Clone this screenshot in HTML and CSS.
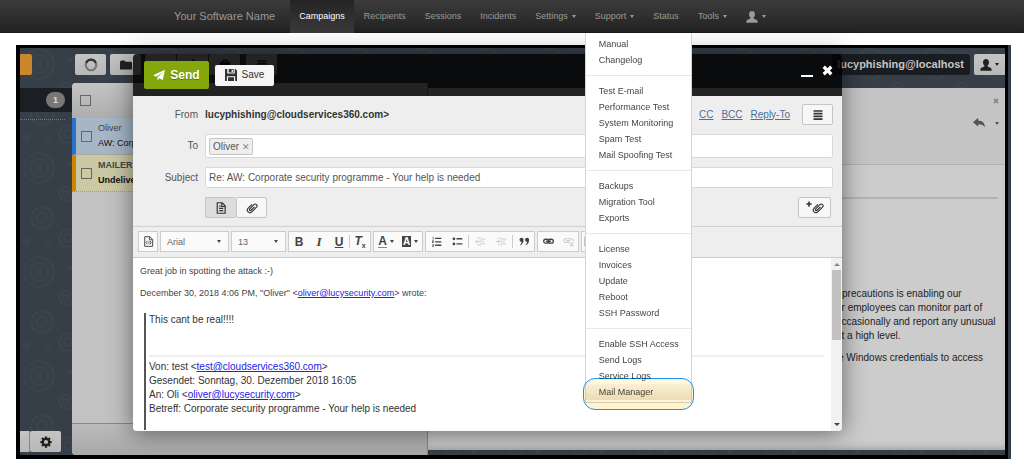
FILE: index.html
```html
<!DOCTYPE html>
<html lang="en">
<head>
<meta charset="utf-8">
<title>Your Software Name</title>
<link rel="stylesheet" href="styles.css">
</head>
<body>
<svg class="sprite" aria-hidden="true">
  <symbol id="user" viewBox="0 0 16 16"><path d="M8 0c2.600 0 4 1.800 4 4.200 0 1.700-.8 3.500-1.900 4.400v1.200c1 1.300 5.400 1.500 5.400 4.200v1.500H.5V14c0-2.700 4.400-2.900 5.400-4.200V8.600C4.800 7.700 4 5.900 4 4.200 4 1.800 5.400 0 8 0z"/></symbol>
  <symbol id="plane" viewBox="0 0 16 16"><path d="M16 1 13 14.500 8.300 12.200 6 15.500V11.300L13.500 3.800 4.500 10.300.2 8.400z"/></symbol>
  <symbol id="floppy" viewBox="0 0 16 16"><path d="M0 0h3v6h10V0h1l2 2v14h-2.500V9.500h-11V16H0zM5 0h6.500v4.800H5zm3.800.9v3h1.700v-3zM4 11h8v5H4z" fill-rule="evenodd"/></symbol>
  <symbol id="bars" viewBox="0 0 16 16"><path d="M2 1.500h12v2.200H2zm0 3.600h12v2.200H2zm0 3.600h12v2.200H2zm0 3.600h12v2.200H2z"/></symbol>
  <symbol id="clip" viewBox="0 0 16 16"><path transform="rotate(45 8 8)" d="M4.500 4.500v7.300a3.500 3.500 0 0 0 7 0V3a2.400 2.400 0 0 0-4.800 0v8a1.200 1.200 0 0 0 2.500 0V4.500" fill="none" stroke="currentColor" stroke-width="1.500"/></symbol>
  <symbol id="doc" viewBox="0 0 16 16"><path d="M3 1h6.500L13.500 5v10H3zM9 1.500V6h4M5.500 8.500h5.500M5.500 11.500h5.500M5.500 5.500h2" fill="none" stroke="currentColor" stroke-width="1.600"/></symbol>
  <symbol id="source" viewBox="0 0 16 16"><path d="M2.500 1h7.500L14 5v10H2.500zM9.500 1.500V5.500H13.500M6.500 7 4.500 9.500l2 2.500M10 7l2 2.500-2 2.500M8.800 8v3" fill="none" stroke="currentColor" stroke-width="1.400"/></symbol>
  <symbol id="numbers" viewBox="0 0 16 16"><path d="M6 2.500h9v2H6zm0 5h9v2H6zm0 5h9v2H6zM2.500 1h1v4h-1zM1.500 6.500h2.500v2l-1.500 1H4v.8H1.300v-1l1.600-1.200H1.500zM1.500 11.500H4v4H1.500v-.8h1.600v-1H2v-.6h1.100v-.8H1.500z"/></symbol>
  <symbol id="bullets" viewBox="0 0 16 16"><path d="M6.500 3h8.500v2H6.500zm0 7.500h8.500v2H6.500z"/><circle cx="2.800" cy="4" r="2"/><circle cx="2.800" cy="11.500" r="2"/></symbol>
  <symbol id="outdent" viewBox="0 0 16 16"><path d="M7 1h1v14H7zM9 3.500h6V5H9zm0 3.500h4v1.500H9zm0 3.500h6V12H9zM0 8l3.500-3v2.200H6.500v1.600H3.500V11zM3 2.500h4v1H3zm0 10h4v1H3z"/></symbol>
  <symbol id="indent" viewBox="0 0 16 16"><path d="M7 1h1v14H7zM9 3.500h6V5H9zm0 3.500h4v1.500H9zm0 3.500h6V12H9zM6.500 8 3 5v2.200H0v1.600h3V11zM2 2.500h4v1H2zm0 10h4v1H2z"/></symbol>
  <symbol id="quote" viewBox="0 0 16 16"><path d="M3.700 2.500a3 3 0 0 1 3 3.100c0 3.300-1.600 6.200-4.400 7.900l-.7-.8c1.300-1.200 2.100-2.600 2.200-4.100A3 3 0 0 1 3.700 2.500zm8 0a3 3 0 0 1 3 3.100c0 3.300-1.600 6.200-4.400 7.900l-.7-.8c1.300-1.200 2.100-2.600 2.200-4.100a3 3 0 0 1-.1-6.100z"/></symbol>
  <symbol id="link" viewBox="0 0 16 16"><g fill="none" stroke="currentColor" stroke-width="1.900"><rect x="1" y="4.700" width="7.500" height="5.800" rx="2.900"/><rect x="7.500" y="4.700" width="7.500" height="5.800" rx="2.900"/><path d="M4.500 7.600h7"/></g></symbol>
  <symbol id="unlink" viewBox="0 0 16 16"><g fill="none" stroke="currentColor" stroke-width="1.700"><path d="M10 9.500H4a2.700 2.700 0 0 1 0-5.500h8a2.700 2.700 0 0 1 2.500 4M4.500 6.800h6M10 9.500l5 5.500M15 9.500l-5 5.500"/></g></symbol>
  <symbol id="table" viewBox="0 0 16 16"><path d="M1 1h14v14H1zM2.500 5v3.500H7V5zm6 0v3.500h5V5zm-6 5v3.500H7V10zm6 0v3.500h5V10z" fill-rule="evenodd"/></symbol>
  <symbol id="gear" viewBox="0 0 16 16"><circle cx="8" cy="8" r="4.300" fill="none" stroke="currentColor" stroke-width="3"/><path d="M8 .5v3M8 12.500v3M.5 8h3M12.500 8h3M2.700 2.700l2 2M11.300 11.300l2 2M13.300 2.700l-2 2M4.700 11.300l-2 2" fill="none" stroke="currentColor" stroke-width="3"/></symbol>
  <symbol id="spinner" viewBox="0 0 16 16"><circle cx="8" cy="8" r="6" fill="none" stroke="#777" stroke-width="2.500"/><path d="M2.500 5.500A6 6 0 0 1 13.500 5.500" fill="none" stroke="#333" stroke-width="2.500"/></symbol>
  <symbol id="folder" viewBox="0 0 16 16"><path d="M0 3.500 1.500 2H6l1.500 1.800H14.500L16 5v9H0z"/></symbol>
  <symbol id="reply" viewBox="0 0 16 16"><path d="M0 7 7 1v3.500c5.500.2 8.700 3.200 9 9.500-2-3.300-4.700-4.400-9-4.400V13z"/></symbol>
  <symbol id="trash" viewBox="0 0 16 16"><path d="M2 7h12l-1 8H3zM1 5h14M4 5a4 3.500 0 0 1 8 0M6 9v4M10 9v4" fill="none" stroke="currentColor" stroke-width="2"/></symbol>
  <symbol id="plus" viewBox="0 0 16 16"><path d="M6 1h4v5h5v4h-5v5H6v-5H1V6h5z"/></symbol>
  <symbol id="close" viewBox="0 0 16 16"><path d="m4.200.8 3.800 3.800L11.800.8l3.400 3.400L11.400 8l3.800 3.800-3.400 3.400L8 11.400l-3.800 3.800-3.400-3.400L4.600 8 .8 4.200z"/></symbol>
</svg>

<nav class="navbar">
  <a class="brand" href="#">Your Software Name</a>
  <ul class="nav">
    <li class="active"><a href="#">Campaigns</a></li>
    <li><a href="#">Recipients</a></li>
    <li><a href="#">Sessions</a></li>
    <li><a href="#">Incidents</a></li>
    <li><a href="#">Settings <i class="caret"></i></a></li>
    <li class="open"><a href="#">Support <i class="caret"></i></a>
      <div class="dropdown">
        <ul>
          <li><a href="#">Manual</a></li>
          <li><a href="#">Changelog</a></li>
        </ul>
        <ul>
          <li><a href="#">Test E-mail</a></li>
          <li><a href="#">Performance Test</a></li>
          <li><a href="#">System Monitoring</a></li>
          <li><a href="#">Spam Test</a></li>
          <li><a href="#">Mail Spoofing Test</a></li>
        </ul>
        <ul>
          <li><a href="#">Backups</a></li>
          <li><a href="#">Migration Tool</a></li>
          <li><a href="#">Exports</a></li>
        </ul>
        <ul>
          <li><a href="#">License</a></li>
          <li><a href="#">Invoices</a></li>
          <li><a href="#">Update</a></li>
          <li><a href="#">Reboot</a></li>
          <li><a href="#">SSH Password</a></li>
        </ul>
        <ul>
          <li><a href="#">Enable SSH Access</a></li>
          <li><a href="#">Send Logs</a></li>
          <li><a href="#">Service Logs</a></li>
          <li class="current"><a href="#">Mail Manager</a><span class="highlight"></span></li>
        </ul>
      </div>
    </li>
    <li><a href="#">Status</a></li>
    <li><a href="#">Tools <i class="caret"></i></a></li>
    <li><a href="#" aria-label="Account"><svg class="icon"><use href="#user"/></svg> <i class="caret"></i></a></li>
  </ul>
</nav>

<main class="page">
  <div class="frame">
    <svg class="pattern" aria-hidden="true">
      <defs>
        <pattern id="rings" width="64" height="104" patternUnits="userSpaceOnUse">
          <g fill="none" stroke="#454d57" stroke-width="2">
            <circle cx="19" cy="16" r="15"/><circle cx="19" cy="16" r="9"/><circle cx="19" cy="16" r="3"/>
            <circle cx="46" cy="42" r="7"/><circle cx="46" cy="42" r="3"/>
            <circle cx="22" cy="66" r="11"/><circle cx="22" cy="66" r="5"/>
            <circle cx="48" cy="86" r="9"/><circle cx="48" cy="86" r="4"/>
          </g>
          <g fill="#454d57"><circle cx="6" cy="90" r="4"/><circle cx="28" cy="94" r="2"/><circle cx="50" cy="12" r="3"/></g>
        </pattern>
      </defs>
      <rect width="100%" height="100%" fill="url(#rings)"/>
    </svg>

    <aside class="sidebar">
      <button class="compose" aria-label="Compose"></button>
      <div class="inbox"><span class="badge">1</span></div>
      <div class="rule"></div>
      <div class="side-tools"><button class="tool" aria-label="Contacts"></button><button class="tool" aria-label="Preferences"><svg class="icon"><use href="#gear"/></svg></button></div>
    </aside>

    <div class="mail">
      <div class="mailbar">
        <button class="tool" aria-label="Refresh"><svg class="icon large"><use href="#spinner"/></svg></button>
        <button class="tool" aria-label="Move"><svg class="icon"><use href="#folder"/></svg></button>
        <div class="tool-group">
          <button class="tool" aria-label="Reply"><svg class="icon"><use href="#reply"/></svg></button><button class="tool" aria-label="Add"><svg class="icon"><use href="#plus"/></svg></button><button class="tool" aria-label="Delete"><svg class="icon"><use href="#trash"/></svg></button>
        </div>
        <button class="tool" aria-label="More"><svg class="icon"><use href="#bars"/></svg></button>
        <strong class="account">lucyphishing@localhost</strong>
        <button class="tool user" aria-label="User menu"><svg class="icon"><use href="#user"/></svg><i class="caret"></i></button>
      </div>
      <div class="panes">
        <section class="list">
          <div class="list-head"><input type="checkbox" aria-label="Select all"></div>
          <div class="item blue"><input type="checkbox" aria-label="Select Oliver"><div>Oliver<br><span class="subject">AW: Corp</span></div></div>
          <div class="item yellow"><input type="checkbox" aria-label="Select MAILER"><div><b>MAILER<br><span class="subject">Undelive</span></b></div></div>
          <div class="list-foot"></div>
        </section>
        <article class="reader">
          <header class="reader-head">
            <button class="plain" aria-label="Close message"><svg class="icon small"><use href="#close"/></svg></button>
            <div class="reader-actions"><button class="plain" aria-label="Reply"><svg class="icon"><use href="#reply"/></svg></button><button class="plain" aria-label="More actions"><i class="caret"></i></button></div>
          </header>
          <div class="reader-info"></div>
          <div class="reader-body">
            <p class="first">precautions is enabling our</p>
            <p>ur employees can monitor part of<br>occasionally and report any unusual<br>at a high level.</p>
            <p class="last">e Windows credentials to access</p>
          </div>
        </article>
      </div>
    </div>

    <section class="composer" aria-label="Compose message">
      <header class="composer-head">
        <button class="send"><svg class="icon"><use href="#plane"/></svg>Send</button>
        <button class="save"><svg class="icon"><use href="#floppy"/></svg>Save</button>
        <div class="window-tools">
          <button class="plain" aria-label="Minimize"><span class="minimize"></span></button>
          <button class="plain" aria-label="Close"><svg class="icon"><use href="#close"/></svg></button>
        </div>
      </header>
      <form class="fields">
        <span class="label">From</span>
        <div class="from"><strong>lucyphishing@cloudservices360.com&gt;</strong>
          <div class="extra"><a href="#">CC</a><a href="#">BCC</a><a href="#">Reply-To</a><button type="button" class="box" aria-label="Options"><svg class="icon"><use href="#bars"/></svg></button></div>
        </div>
        <label class="label" for="to">To</label>
        <div class="to"><button type="button" class="tag">Oliver <span>✕</span></button><input id="to" type="text"></div>
        <label class="label" for="subject">Subject</label>
        <input id="subject" class="subject-input" type="text" value="Re: AW: Corporate security programme - Your help is needed">
        <div class="modes">
          <div class="mode-group"><button type="button" class="box pressed" aria-label="Message"><svg class="icon"><use href="#doc"/></svg></button><button type="button" class="box" aria-label="Attachments"><svg class="icon"><use href="#clip"/></svg></button></div>
          <button type="button" class="box attach" aria-label="Add attachment"><svg class="icon tiny"><use href="#plus"/></svg><svg class="icon"><use href="#clip"/></svg></button>
        </div>
      </form>
      <div class="editor-bar">
        <div class="group source"><button aria-label="Source"><svg class="icon"><use href="#source"/></svg></button></div>
        <div class="group font"><select aria-label="Font"><option>Arial</option></select><i class="caret"></i></div>
        <div class="group size"><select aria-label="Size"><option>13</option></select><i class="caret"></i></div>
        <div class="group"><button><b>B</b></button><button class="serif"><b><i>I</i></b></button><button><b><u>U</u></b></button><i class="sep"></i><button><b><i>T</i><sub>x</sub></b></button></div>
        <div class="group"><button class="wide"><b class="ink">A</b><i class="caret"></i></button><button class="wide"><b class="inverse">A</b><i class="caret"></i></button></div>
        <div class="group lists"><button aria-label="Numbered list"><svg class="icon"><use href="#numbers"/></svg></button><button aria-label="Bulleted list"><svg class="icon"><use href="#bullets"/></svg></button><i class="sep"></i><button disabled aria-label="Outdent"><svg class="icon"><use href="#outdent"/></svg></button><button disabled aria-label="Indent"><svg class="icon"><use href="#indent"/></svg></button><i class="sep"></i><button aria-label="Quote"><svg class="icon"><use href="#quote"/></svg></button></div>
        <div class="group"><button aria-label="Link"><svg class="icon"><use href="#link"/></svg></button><button disabled aria-label="Unlink"><svg class="icon"><use href="#unlink"/></svg></button></div>
        <div class="group"><button class="narrow" aria-label="Table"><svg class="icon"><use href="#table"/></svg></button></div>
      </div>
      <div class="message">
        <div class="message-text">
          <p>Great job in spotting the attack :-)</p>
          <p>December 30, 2018 4:06 PM, "Oliver" &lt;<a href="#">oliver@lucysecurity.com</a>&gt; wrote:</p>
          <blockquote>
            This cant be real!!!!
            <hr>
            Von: test &lt;<a href="#">test@cloudservices360.com</a>&gt;<br>
            Gesendet: Sonntag, 30. Dezember 2018 16:05<br>
            An: Oli &lt;<a href="#">oliver@lucysecurity.com</a>&gt;<br>
            Betreff: Corporate security programme - Your help is needed
          </blockquote>
        </div>
        <div class="scrollbar"><i class="up"></i><i class="thumb"></i><i class="down"></i></div>
      </div>
    </section>
  </div>
</main>
</body>
</html>
```

FILE: styles.css
```css
* { box-sizing: border-box; }
body { margin: 0; background: #fff; color: #444; font: 10px/14px "Liberation Sans", Arial, sans-serif; }
button, input, select { font: inherit; color: inherit; margin: 0; padding: 0; }
ul { list-style: none; margin: 0; padding: 0; }
p { margin: 0; }
.sprite { position: absolute; width: 0; height: 0; }
.icon { width: 12px; height: 12px; fill: currentColor; flex: none; }
.icon.large { width: 14px; height: 14px; }
.icon.small { width: 6px; height: 6px; }
.icon.tiny { width: 6px; height: 6px; align-self: flex-start; margin-top: 3px; }
.caret { display: inline-block; flex: none; border: 2px solid transparent; border-top: 3px solid currentColor; border-bottom: 0; }
.plain { border: 0; background: none; display: flex; align-items: center; }

/* Top navigation */
.navbar { display: flex; height: 33px; padding-left: 17%; background: linear-gradient(#3c3c3c, #222); font-size: 9px; line-height: 33px; border-bottom: 1px solid #1a1a1a; }
.navbar a { color: #999; text-decoration: none; }
.brand { font-size: 11px; margin-right: 15px; white-space: nowrap; }
.nav { display: flex; gap: 1px; }
.nav > li { position: relative; height: 33px; }
.nav > li > a { display: flex; align-items: center; gap: 4px; padding: 0 9px; height: 33px; }
.nav > .active { background: linear-gradient(#242424, #3a3a3a); }
.nav > .active > a { color: #fff; }
.dropdown { position: absolute; z-index: 5; top: 33px; left: -1px; width: 107px; padding: 3px 0 2px; background: #fff; border: 1px solid #d5d5d5; border-top: 0; line-height: 16px; }
.dropdown ul + ul { margin-top: 7px; padding-top: 7px; border-top: 1px solid #e8e8e8; }
.dropdown a { display: block; padding-left: 13px; color: #444; white-space: nowrap; }
.current { position: relative; background: linear-gradient(#fbf8f4, #ece6da); }
.highlight { position: absolute; top: -6px; left: -3px; right: -3px; height: 32px; border: 1px solid #1496f4; border-radius: 12px; background: linear-gradient(#fff8e2, #fff3cd); mix-blend-mode: multiply; }

/* Webmail window */
.page { padding: 12px 16px 12px 16px; }
.frame { position: relative; display: grid; grid-template-columns: 52px 1fr; min-height: 414px; background: #363e48; border: 3px solid #000; border-left-width: 4px; border-bottom-width: 4px; box-shadow: 3px 0 0 #363e48; }
.pattern { position: absolute; width: 100%; height: 100%; opacity: .35; }
.sidebar { position: relative; display: flex; flex-direction: column; padding-top: 6px; }
.compose { width: 12px; height: 21px; border: 0; border-radius: 0 2px 2px 0; background: #cc862b; }
.inbox { display: flex; justify-content: flex-end; align-items: center; margin-top: 13px; height: 24px; padding-right: 7px; background: #1b1f24; }
.badge { padding: 0 7px; border-radius: 8px; background: #777; color: #ddd; font-weight: bold; font-size: 9px; line-height: 16px; }
.rule { width: 45px; margin-top: 7px; border-top: 1px dotted #777; }
.side-tools { display: flex; margin-top: auto; padding-bottom: 3px; }
.side-tools .tool:first-child { width: 10px; border-right: 1px solid #888; border-radius: 0; }
.tool { display: flex; align-items: center; justify-content: center; gap: 3px; width: 31px; height: 21px; border: 0; border-radius: 2px; background: linear-gradient(#c4c4c4, #b8b8b8); color: #222; }
.mail { position: relative; display: flex; flex-direction: column; min-width: 0; }
.mailbar { display: flex; gap: 4px; padding: 6px 0 8px 3px; }
.tool-group { display: flex; gap: 1px; margin-right: 2px; }
.account { margin-left: auto; padding: 0 6px 0 5px; border-radius: 3px; background: #191d21; color: #c6c6c6; font-size: 11px; line-height: 21px; }
.tool.user { border-radius: 2px 0 0 2px; }
.panes { display: grid; grid-template-columns: 356fr 577fr; flex: 1; }
.list { display: flex; flex-direction: column; background: #c2c2c2; border-radius: 4px 0 0 4px; border-right: 1px solid #888; color: #444; }
.list-head { display: flex; align-items: center; height: 35px; padding-left: 8px; background: linear-gradient(#c4c4c4, #adadad); border-radius: 4px 0 0 0; }
.list input { appearance: none; width: 11px; height: 11px; border: 1px solid #666; flex: none; }
.item { display: flex; align-items: center; gap: 6px; height: 37px; padding-left: 5px; font-size: 9px; line-height: 15px; border-left: 4px solid; border-bottom: 1px dotted #999; white-space: nowrap; }
.subject { color: #111; }
.blue { background: #a6b6c6; border-left-color: #2c72c7; }
.yellow { background: #cbc8a4; border-left-color: #d08400; }
.list-foot { margin-top: auto; height: 32px; border-top: 1px solid #888; background: linear-gradient(#bbb, #a8a8a8); border-radius: 0 0 0 4px; }
.reader { display: flex; flex-direction: column; margin: 5px 0; background: #ccc; color: #222; box-shadow: inset 0 -6px 8px -6px #888; }
.reader-head { display: flex; flex-direction: column; align-items: flex-end; gap: 13px; height: 77px; padding: 10px 6px; background: #c5c5c5; border-bottom: 1px solid #b0b0b0; color: #888; }
.reader-actions { display: flex; align-items: center; gap: 10px; color: #555; }
.reader-info { height: 34px; margin-right: 7px; border-bottom: 2px solid #b3b3b3; }
.reader-body { width: 169px; margin: 88px 0 0 auto; white-space: nowrap; }
.reader-body .first { padding-left: 6px; }
.reader-body .last { margin-top: 8px; padding-left: 2px; }

/* Compose dialog, floating above the mailbox */
.composer { position: absolute; z-index: 2; top: 6px; right: 163px; bottom: 24px; left: 113px; display: flex; flex-direction: column; border-radius: 4px; box-shadow: 0 2px 24px rgba(0, 0, 0, .5); overflow: hidden; }
.composer-head { display: flex; align-items: center; gap: 6px; height: 42px; flex: none; padding: 0 9px 0 11px; background: rgba(0, 0, 0, .82); }
.send, .save { display: flex; align-items: center; justify-content: center; border: 0; border-radius: 2px; }
.send { gap: 5px; width: 65px; height: 28px; background: #84a80b; color: #fff; font-size: 12px; font-weight: bold; text-shadow: 0 1px 1px #567000; }
.save { gap: 5px; width: 59px; height: 21px; background: #f6f6f6; color: #333; }
.window-tools { display: flex; gap: 9px; margin-left: auto; margin-bottom: 10px; color: #fff; }
.window-tools .icon { width: 11px; height: 11px; }
.minimize { width: 12px; height: 2px; margin-top: 12px; background: #fff; }
.fields { display: grid; grid-template-columns: 65px 1fr; align-items: center; gap: 9px 7px; padding: 8px 9px 8px 0; background: #eee; border-bottom: 1px solid #d0d0d0; }
.label { text-align: right; color: #555; }
.from, .extra, .modes, .mode-group { display: flex; align-items: center; }
.from strong { color: #333; }
.extra { gap: 8px; margin-left: auto; }
.extra a { color: #4d6f96; }
.box { display: flex; align-items: center; justify-content: center; width: 31px; height: 21px; border: 1px solid #c5c5c5; border-radius: 2px; background: #f7f7f7; color: #333; }
.extra .box { margin-left: 4px; }
.to, .subject-input { border: 1px solid #d8d8d8; border-radius: 2px; background: #fff; }
.to { display: flex; align-items: center; height: 24px; padding-left: 3px; }
.to input { flex: 1; border: 0; background: none; outline: 0; }
.tag { height: 17px; padding: 0 3px; border: 1px solid #c4c4c4; border-radius: 2px; background: #eee; color: #555; line-height: 15px; }
.tag span { color: #888; font: 9px "DejaVu Sans", sans-serif; }
.subject-input { width: 100%; height: 21px; padding: 0 3px; color: #555; }
.modes { grid-column: 2; justify-content: space-between; }
.pressed { background: #ddd; border-right: 0; }
.attach { width: 33px; margin-right: 2px; }
.editor-bar { display: flex; gap: 2px; padding: 4px 5px 5px; background: #eee; border-bottom: 1px solid #ccc; }
.group { position: relative; display: flex; align-items: center; height: 21px; border: 1px solid #ccc; background: #fafafa; color: #444; }
.group button { display: flex; align-items: center; justify-content: center; width: 20px; height: 19px; border: 0; background: none; font-size: 12px; }
.group button:disabled { color: #ccc; }
.group .icon { width: 11px; height: 11px; }
.group sub { font-size: 7px; line-height: 7px; }
.group .serif { font-family: "Liberation Serif", serif; font-size: 13px; }
.group .wide { width: 24px; gap: 3px; }
.group .narrow { width: 14px; }
.group.source button { width: 18px; }
.group.lists { gap: 1px; }
.group select { width: 100%; height: 19px; padding-left: 6px; appearance: none; border: 0; background: none; font-size: 9px; color: #666; }
.group select + .caret { position: absolute; right: 7px; pointer-events: none; }
.font { width: 69px; }
.size { width: 55px; }
.sep { width: 1px; height: 13px; background: #ccc; }
.ink { line-height: 11px; border-bottom: 1px solid #888; }
.inverse { padding: 0 1px; background: #444; color: #fff; font-size: 10px; line-height: 11px; }
.message { display: flex; flex: 1; min-height: 0; background: #fff; }
.message-text { flex: 1; padding: 6px 7px 0; font-size: 9px; }
.message-text p { margin-bottom: 8px; }
.message-text a { color: #22e; }
blockquote { margin: 13px 0 0 4px; padding: 0 0 14px 3px; border-left: 2px solid #555; font-size: 10px; color: #333; }
hr { margin: 28px 0 3px; border: 0; border-top: 2px solid #eee; }
.scrollbar { display: flex; flex-direction: column; align-items: center; width: 11px; padding: 5px 0; background: #f1f1f1; }
.thumb { width: 9px; height: 70px; margin-top: 4px; background: #c1c1c1; }
.up, .down { border: 3px solid transparent; }
.up { border-top: 0; border-bottom-color: #888; }
.down { margin-top: auto; border-bottom: 0; border-top-color: #444; }
```
